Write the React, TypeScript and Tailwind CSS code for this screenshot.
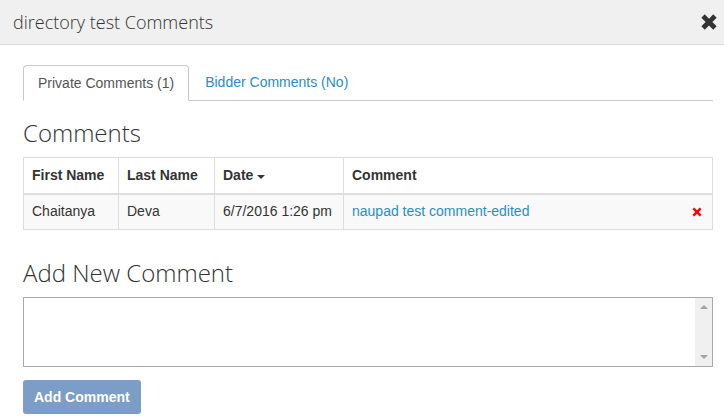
// App.tsx — "directory test Comments" modal: tabs, comments table, new comment form.

const COMMENTS = [
  { first: 'Chaitanya', last: 'Deva', date: '6/7/2016 1:26 pm', text: 'naupad test comment-edited' },
];

function CloseIcon() {
  return (
    <svg viewBox="0 0 16 16" className="h-[18px] w-[18px]" fill="#333">
      <path d="M1.2 4.2 4.2 1.2 8 5 11.8 1.2 14.8 4.2 11 8 14.8 11.8 11.8 14.8 8 11 4.2 14.8 1.2 11.8 5 8Z" />
    </svg>
  );
}

function DeleteIcon() {
  return (
    <svg viewBox="0 0 10 10" className="h-[10px] w-[10px]" fill="#ff0000">
      <path d="M0.5 2.2 2.2 0.5 5 3.3 7.8 0.5 9.5 2.2 6.7 5 9.5 7.8 7.8 9.5 5 6.7 2.2 9.5 0.5 7.8 3.3 5Z" />
    </svg>
  );
}

export default function App() {
  return (
    <div className="h-[417px] w-[724px] overflow-hidden bg-white font-['Liberation_Sans',Arial,sans-serif] text-[14px] text-[#333]">
      {/* header */}
      <div className="flex h-[45px] items-center justify-between border-b border-[#d9d9d9] bg-[#f0f0f0] pl-[13px] pr-[6px]">
        <h1 className="font-['Open_Sans',sans-serif] text-[18px] font-light text-[#333]">directory test Comments</h1>
        <button className="flex items-center justify-center">
          <CloseIcon />
        </button>
      </div>

      <div className="px-[23px] pr-[11px] pt-[20px]">
        {/* tabs */}
        <div className="flex border-b border-[#c8c8c8]">
          <div className="-mb-px rounded-t-[4px] border border-[#c8c8c8] border-b-white bg-white px-[14px] py-[7px] leading-[20px] text-[#555]">
            Private Comments (1)
          </div>
          <div className="px-[16px] py-[7px] leading-[20px] text-[#2a8dc8]">Bidder Comments (No)</div>
        </div>

        <h2 className="mt-[17px] font-['Open_Sans',sans-serif] text-[24px] leading-[30px] font-light text-[#333]">Comments</h2>

        <table className="mt-[9px] w-full border-collapse border border-[#ddd]">
          <thead>
            <tr className="h-[36px] text-left">
              <th className="w-[95px] border border-[#ddd] border-b-2 px-[8px] font-bold">First Name</th>
              <th className="w-[96px] border border-[#ddd] border-b-2 px-[8px] font-bold">Last Name</th>
              <th className="w-[129px] border border-[#ddd] border-b-2 px-[8px] font-bold">
                <span className="inline-flex items-center gap-[4px]">
                  Date
                  <svg viewBox="0 0 8 4" className="mt-[3px] h-[4px] w-[8px]" fill="#333">
                    <path d="M0 0h8L4 4Z" />
                  </svg>
                </span>
              </th>
              <th className="border border-[#ddd] border-b-2 px-[8px] font-bold">Comment</th>
            </tr>
          </thead>
          <tbody>
            {COMMENTS.map((c) => (
              <tr key={c.date} className="h-[36px] bg-[#f9f9f9]">
                <td className="border border-[#ddd] px-[8px]">{c.first}</td>
                <td className="border border-[#ddd] px-[8px]">{c.last}</td>
                <td className="border border-[#ddd] px-[8px]">{c.date}</td>
                <td className="border border-[#ddd] px-[8px]">
                  <div className="flex items-center justify-between">
                    <a className="text-[#2a8dc8]">{c.text}</a>
                    <span className="mr-[2px]">
                      <DeleteIcon />
                    </span>
                  </div>
                </td>
              </tr>
            ))}
          </tbody>
        </table>

        <h2 className="mt-[28px] font-['Open_Sans',sans-serif] text-[24px] leading-[30px] font-light text-[#333]">Add New Comment</h2>

        {/* textarea with classic scrollbar */}
        <div className="mt-[9px] flex h-[70px] border border-[#a9a9a9]">
          <textarea className="h-full flex-1 resize-none outline-none" />
          <div className="flex w-[17px] flex-col items-center justify-between bg-[#f0f0f0] py-[7px]">
            <svg viewBox="0 0 8 4" className="h-[4px] w-[8px]" fill="#a3a3a3">
              <path d="M4 0 8 4H0Z" />
            </svg>
            <svg viewBox="0 0 8 4" className="h-[4px] w-[8px]" fill="#a3a3a3">
              <path d="M0 0h8L4 4Z" />
            </svg>
          </div>
        </div>

        <button className="mt-[13px] h-[34px] rounded-[3px] bg-[#7b9dc7] px-[11px] font-bold text-white">Add Comment</button>
      </div>
    </div>
  );
}
